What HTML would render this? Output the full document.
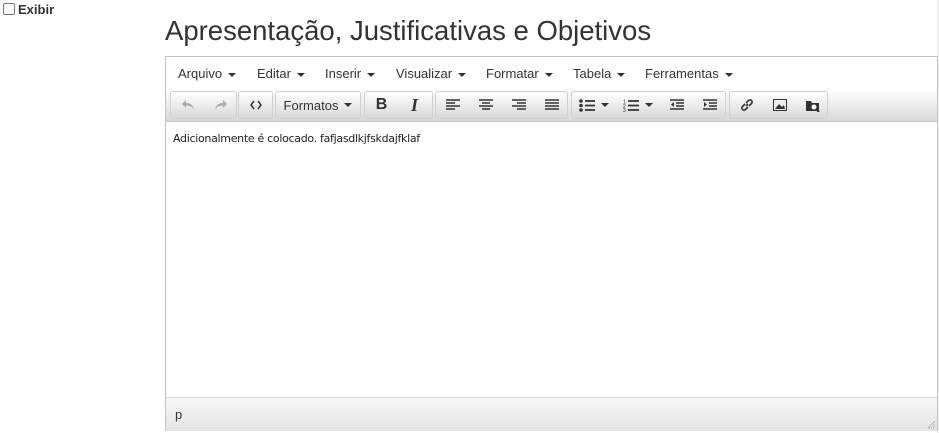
<!DOCTYPE html>
<html><head><meta charset="utf-8"><style>
body{margin:0;width:939px;height:433px;background:#fff;font-family:"Liberation Sans",Arial,sans-serif;position:relative;overflow:hidden}
.a{position:absolute}
.ed{left:165px;top:56px;width:773px;height:375px;border:1px solid #c5c5c5;box-sizing:border-box}
.menu{left:0;top:0;width:771px;height:32px;background:#fff;border-bottom:1px solid #e2e2e2}
.menu span{position:absolute;top:9px;font-size:13px;color:#333}
.car{display:inline-block;width:0;height:0;border-left:4px solid transparent;border-right:4px solid transparent;border-top:4px solid #333;vertical-align:middle;margin-left:6px}
.tb{left:0;top:32px;width:771px;height:32px;background:linear-gradient(#fff,#d9d9d9);border-bottom:1px solid #c5c5c5}
.g{position:absolute;top:2px;height:28px;border:1px solid #d0d0d0;border-radius:3px;box-sizing:border-box;background:linear-gradient(#fff,#d9d9d9)}
.b{position:absolute;top:0;height:26px;display:flex;align-items:center;justify-content:center;font-size:13px;color:#333}
.content{left:0;top:65px;width:771px;height:275px;background:#fff}
.st{left:0;top:340px;width:771px;height:33px;background:linear-gradient(#f8f8f8,#e3e3e3);border-top:1px solid #ddd}
</style></head><body>
<div class="a" style="left:3px;top:3px;width:10px;height:10px;border:1px solid #777;border-radius:2px"></div>
<div class="a" style="left:18px;top:2px;font-size:13px;font-weight:bold;color:#333">Exibir</div>
<div class="a" style="left:165px;top:15px;font-size:27.5px;color:#333">Apresentação, Justificativas e Objetivos</div>
<div class="a" style="left:937px;top:0;width:2px;height:433px;background:#eee"></div>
<div class="a ed">
 <div class="a menu">
  <span style="left:12px">Arquivo<i class="car"></i></span>
  <span style="left:91px">Editar<i class="car"></i></span>
  <span style="left:159px">Inserir<i class="car"></i></span>
  <span style="left:230px">Visualizar<i class="car"></i></span>
  <span style="left:320px">Formatar<i class="car"></i></span>
  <span style="left:407px">Tabela<i class="car"></i></span>
  <span style="left:479px">Ferramentas<i class="car"></i></span>
 </div>
 <div class="a tb">
  <div class="g" style="left:4px;width:67px">
   <div class="b" style="left:0;width:33px"><svg width="14" height="12"><path d="M5 1L1 5l4 4V6.5c4 0 6 1 8 4.5c-1-5-4-7-8-7z" fill="#aaa"/></svg></div>
   <div class="b" style="left:33px;width:33px"><svg width="14" height="12"><path d="M9 1l4 4-4 4V6.5c-4 0-6 1-8 4.5c1-5 4-7 8-7z" fill="#aaa"/></svg></div></div>
  <div class="g" style="left:72px;width:35px"><div class="b" style="left:0;width:33px"><svg width="12" height="10"><path d="M4 1L1 5l3 4M8 1l3 4-3 4" stroke="#333" stroke-width="1.5" fill="none"/></svg></div></div>
  <div class="g" style="left:109px;width:86px"><div class="b" style="left:0;width:84px">Formatos<i class="car"></i></div></div>
  <div class="g" style="left:198px;width:69px"><div class="b" style="left:0;width:33px;font-weight:bold;font-size:16px">B</div><div class="b" style="left:33px;width:33px;font-style:italic;font-weight:bold;font-family:'Liberation Serif';font-size:18px">I</div></div>
  <div class="g" style="left:269px;width:133px">
   <div class="b" style="left:0;width:33px"><svg width="14" height="12"><path d="M0 1h14M0 4h9M0 7h14M0 10h9" stroke="#333" stroke-width="1.6"/></svg></div>
   <div class="b" style="left:33px;width:33px"><svg width="14" height="12"><path d="M0 1h14M3 4h8M0 7h14M3 10h8" stroke="#333" stroke-width="1.6"/></svg></div>
   <div class="b" style="left:66px;width:33px"><svg width="14" height="12"><path d="M0 1h14M5 4h9M0 7h14M5 10h9" stroke="#333" stroke-width="1.6"/></svg></div>
   <div class="b" style="left:99px;width:33px"><svg width="14" height="12"><path d="M0 1h14M0 4h14M0 7h14M0 10h14" stroke="#333" stroke-width="1.6"/></svg></div></div>
  <div class="g" style="left:405px;width:155px">
   <div class="b" style="left:0;width:44px"><svg width="16" height="13"><circle cx="2" cy="2" r="1.8" fill="#333"/><circle cx="2" cy="6.5" r="1.8" fill="#333"/><circle cx="2" cy="11" r="1.8" fill="#333"/><path d="M6 2h10M6 6.5h10M6 11h10" stroke="#333" stroke-width="1.8"/></svg><i class="car"></i></div>
   <div class="b" style="left:44px;width:44px"><svg width="16" height="13"><text x="0" y="4.5" font-size="5" fill="#333" font-family="Liberation Sans">1</text><text x="0" y="9" font-size="5" fill="#333" font-family="Liberation Sans">2</text><text x="0" y="13" font-size="5" fill="#333" font-family="Liberation Sans">3</text><path d="M5 2h11M5 6.5h11M5 11h11" stroke="#333" stroke-width="1.8"/></svg><i class="car"></i></div>
   <div class="b" style="left:88px;width:33px"><svg width="14" height="12"><path d="M0 1h14M6 4h8M6 7h8M0 10h14" stroke="#333" stroke-width="1.6"/><path d="M4 3v5L1 5.5z" fill="#333"/></svg></div>
   <div class="b" style="left:121px;width:33px"><svg width="14" height="12"><path d="M0 1h14M6 4h8M6 7h8M0 10h14" stroke="#333" stroke-width="1.6"/><path d="M1 3v5l3-2.5z" fill="#333"/></svg></div></div>
  <div class="g" style="left:563px;width:99px">
   <div class="b" style="left:0;width:33px"><svg width="14" height="14"><path d="M6 8L8 6M5 6L2.5 8.5a2 2 0 0 0 3 3L8 9M9 8l2.5-2.5a2 2 0 0 0-3-3L6 5" stroke="#333" stroke-width="1.6" fill="none"/></svg></div>
   <div class="b" style="left:33px;width:33px"><svg width="14" height="12"><rect x="0.5" y="0.5" width="13" height="11" fill="none" stroke="#333"/><path d="M2 10 L6 5 L9 8 L11 6 L12 10Z" fill="#333"/></svg></div>
   <div class="b" style="left:66px;width:33px"><svg width="16" height="14"><path d="M1 3h5l1 2h7v8H1z" fill="#333"/><circle cx="9" cy="9" r="3" fill="#fff" stroke="#333"/><path d="M11 11l3 3" stroke="#333" stroke-width="2"/></svg></div>
  </div>
 </div>
 <div class="a content"><div class="a" style="left:7px;top:10px;font-size:11px;color:#222;font-family:'DejaVu Sans',sans-serif;letter-spacing:-0.3px">Adicionalmente é colocado. fafjasdlkjfskdajfklaf</div></div>
 <div class="a st"><div class="a" style="left:9px;top:9px;font-size:13px;color:#333">p</div>
  <svg class="a" style="right:2px;bottom:2px" width="8" height="8"><path d="M7 1v6H1z" fill="none" stroke="#999" stroke-dasharray="1 1"/></svg></div>
</div>
</body></html>
